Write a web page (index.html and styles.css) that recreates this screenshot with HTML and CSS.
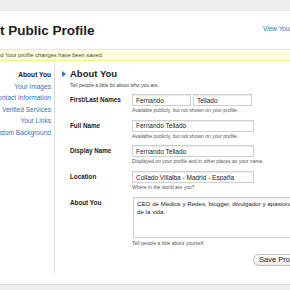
FILE: index.html
```html
<!DOCTYPE html>
<html lang="en">
<head>
<meta charset="UTF-8">
<meta name="viewport" content="width=device-width,initial-scale=1">
<title>Edit Public Profile</title>
<link rel="stylesheet" href="styles.css">
</head>
<body>

<div class="topbar"></div>

<header class="head">
  <h1>Edit Public Profile</h1>
  <a href="#" class="view-link">View Your Profile</a>
</header>

<div class="notice"><span class="tag">Updated</span> Your profile changes have been saved.</div>

<div class="main">
  <!-- side nav -->
  <nav class="side">
    <a href="#" class="current">About You</a>
    <a href="#">Your Images</a>
    <a href="#">Contact Information</a>
    <a href="#">Verified Services</a>
    <a href="#">Your Links</a>
    <a href="#">Custom Background</a>
  </nav>

  <section class="content">
    <h2><span class="arrow"></span>About You</h2>
    <p class="desc">Tell people a little bit about who you are.</p>

    <form class="form">
      <label class="lbl">First/Last Names</label>
      <div class="field">
        <div class="pair">
          <input class="inp half" value="Fernando">
          <input class="inp half" value="Tellado">
        </div>
        <p class="hint">Available publicly, but not shown on your profile.</p>
      </div>

      <label class="lbl">Full Name</label>
      <div class="field">
        <input class="inp" value="Fernando Tellado">
        <p class="hint">Available publicly, but not shown on your profile.</p>
      </div>

      <label class="lbl">Display Name</label>
      <div class="field">
        <input class="inp" value="Fernando Tellado">
        <p class="hint">Displayed on your profile and in other places as your name.</p>
      </div>

      <label class="lbl">Location</label>
      <div class="field">
        <input class="inp" value="Collado Villalba - Madrid - España">
        <p class="hint">Where in the world are you?</p>
      </div>

      <label class="lbl">About You</label>
      <div class="field last">
        <textarea class="area">CEO de Medios y Redes, blogger, divulgador y apasionado de la vida.</textarea>
        <p class="hint">Tell people a little about yourself.</p>
        <div class="actions"><button type="button" class="btn">Save Profile</button></div>
      </div>
    </form>
  </section>
</div>

<div class="footer"></div>

</body>
</html>
```

FILE: styles.css
```css
/* ---------- base ---------- */
*{box-sizing:border-box}
body{
  margin:0;width:290px;height:290px;overflow:hidden;
  font-family:"Liberation Sans",Arial,sans-serif;color:#222;background:#fff;
}
a{text-decoration:none;color:#2f74c2}

.topbar{height:11px;background:#eeeeee;border-bottom:1px solid #e4e4e4}

/* ---------- header ---------- */
.head{
  display:flex;justify-content:space-between;align-items:center;
  height:38px;width:312px;
}
.head h1{margin:1px 0 0 -21px;font-size:13.5px;font-weight:700;color:#1c1c1c;white-space:nowrap}
.view-link{font-size:6.5px;white-space:nowrap;margin-top:-3px}

.notice{
  height:12px;width:330px;margin-left:-18px;
  background:#ffffd8;border-top:1px solid #f4ee8e;border-bottom:1px solid #f4ee8e;
  font-size:5.7px;line-height:10px;color:#444;white-space:nowrap;
}

/* ---------- main ---------- */
.main{display:flex;margin-top:4px;height:208px}
.side{
  flex:0 0 55px;min-width:0;display:flex;flex-direction:column;align-items:flex-end;
  padding:4px 3px 0 0;border-right:1px solid #dddddd;
}
.side a{font-size:6.6px;line-height:11.6px;white-space:nowrap}
.side a.current{color:#222;font-weight:700}

.content{padding-left:15px;flex:0 0 auto;width:260px}
.content h2{
  display:flex;align-items:center;gap:4px;margin:3px 0 0 -8px;
  font-size:9.5px;line-height:12px;color:#1c1c1c;
}
.arrow{width:0;height:0;border-left:4px solid #2f74c2;border-top:3px solid transparent;border-bottom:3px solid transparent}
.desc{margin:2px 0 0;font-size:5px;line-height:7px;color:#444}

/* ---------- form ---------- */
.form{display:grid;grid-template-columns:62px 1fr;margin-top:5px}
.lbl{font-size:6.3px;font-weight:700;line-height:12px;color:#1a1a1a;white-space:nowrap}
.field{padding-bottom:5.7px}
.field.last{padding-bottom:0}
.pair{display:flex;gap:2px}
.inp{
  display:block;width:122px;height:12px;margin:0;padding:0 3px;
  border:1px solid #cfcfcf;box-shadow:inset 0 1px 1px rgba(0,0,0,.08);
  font:6.5px "Liberation Sans",Arial,sans-serif;color:#222;background:#fff;
}
.inp.half{width:59px}
.hint{margin:0;font-size:5px;line-height:8px;color:#555;white-space:nowrap}
.area{
  display:block;width:174px;height:41px;margin:0 0 0 1px;padding:2px 3px;resize:none;
  border:1px solid #cfcfcf;box-shadow:inset 0 1px 1px rgba(0,0,0,.08);
  font:6.2px/8.5px "Liberation Sans",Arial,sans-serif;color:#1a1a1a;
}
.field .area + .hint{margin-top:1px}
.actions{display:flex;padding:7px 0 0 121px}
.btn{
  height:12px;padding:0 5px;border:1px solid #bdbdbd;border-radius:7px;
  background:linear-gradient(#ffffff,#ececec);
  font:7.5px "Liberation Sans",Arial,sans-serif;color:#222;white-space:nowrap;
}

.footer{margin-top:11px;height:10px;background:#eeeeee;border-top:1px solid #dcdcdc}
```
